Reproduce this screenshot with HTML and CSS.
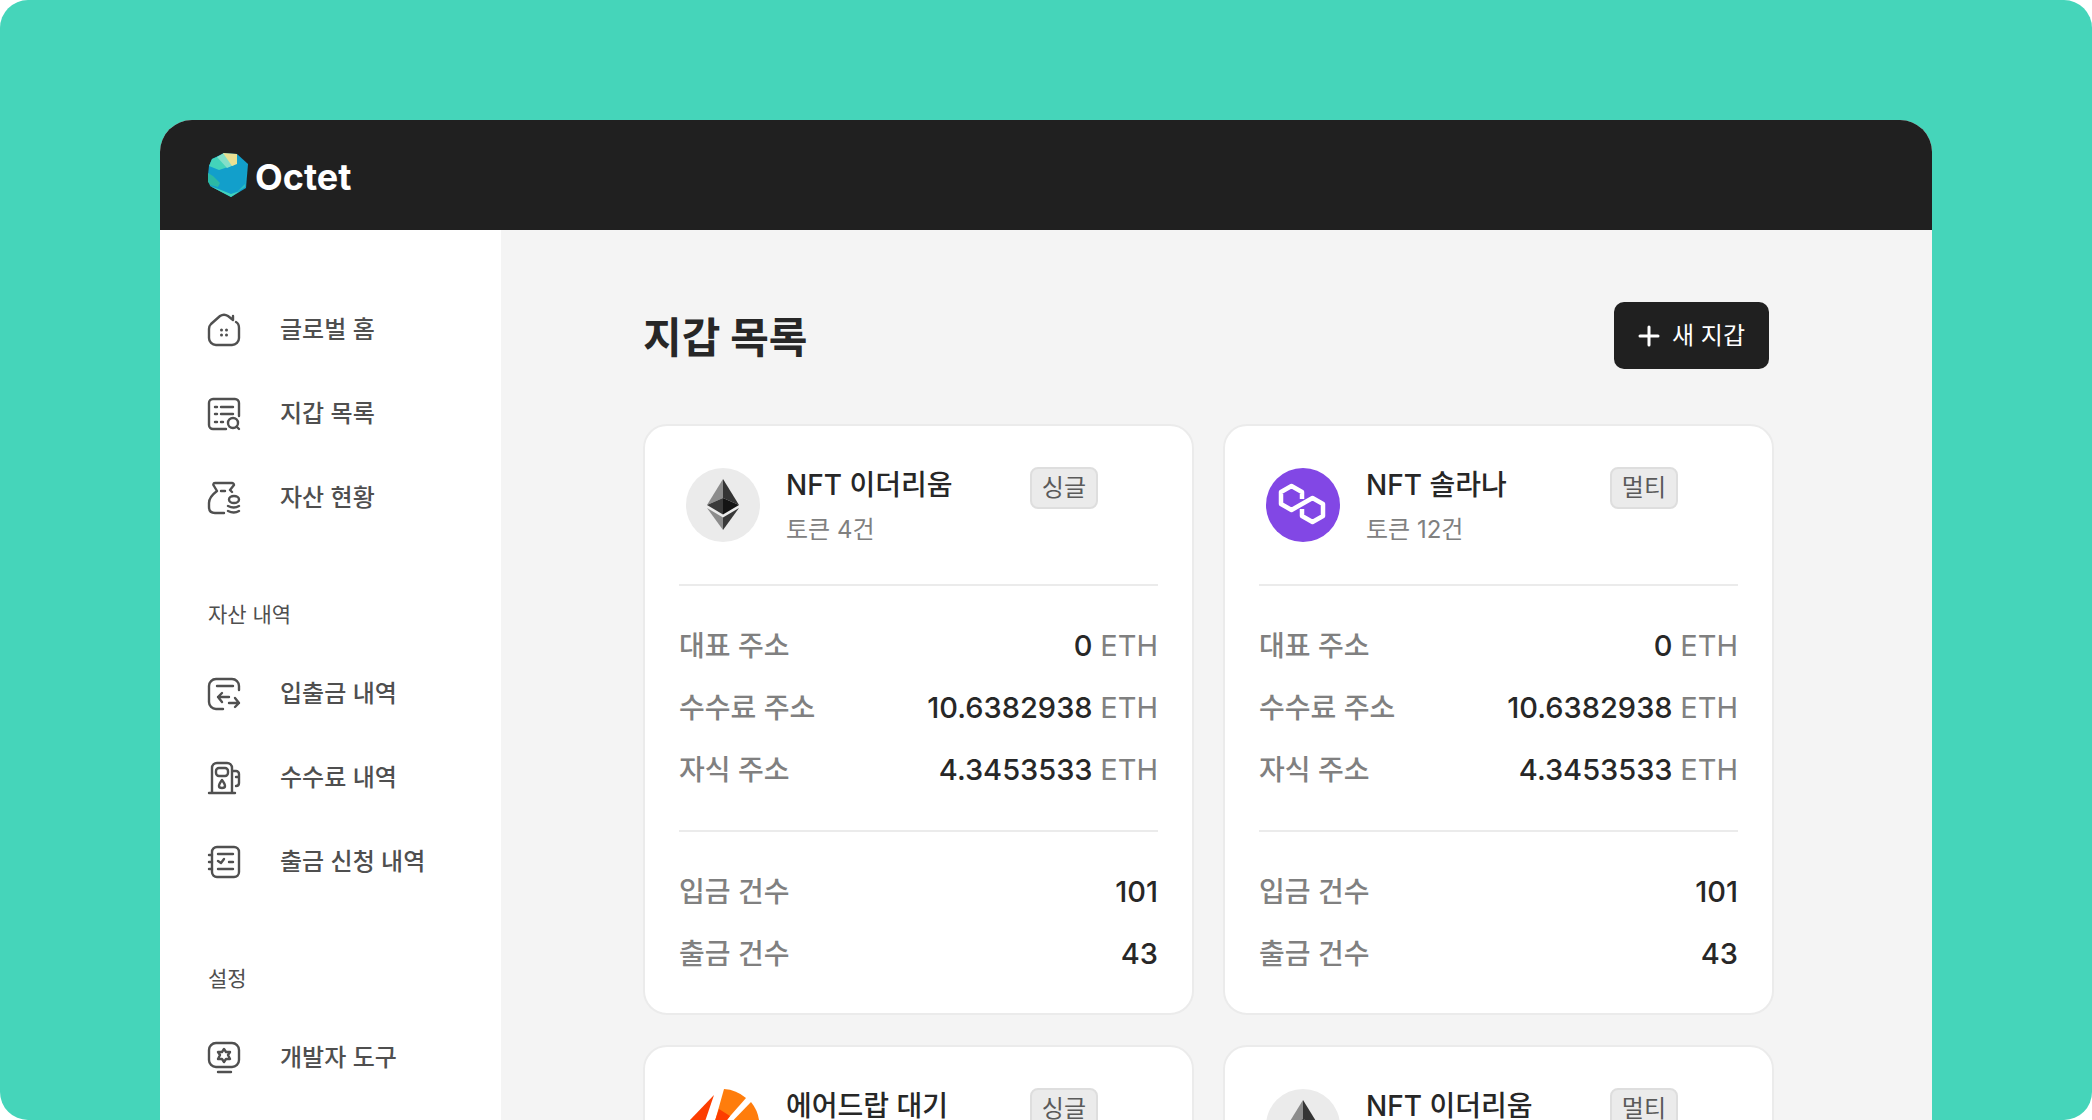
FILE: index.html
```html
<!DOCTYPE html>
<html lang="ko">
<head>
    <meta charset="UTF-8">
    <meta name="viewport" content="width=device-width, initial-scale=1.0">
    <title>Octet</title>
    <link rel="stylesheet" href="styles.css">
</head>
<body>
    <!-- Shared coin logos -->
    <svg class="symbols" aria-hidden="true">
        <symbol id="eth" viewBox="0 0 74 74">
            <circle cx="37" cy="37" r="37" fill="#ebebeb"/>
            <path d="M37 11L21 37l16-7z" fill="#8c8c8c"/>
            <path d="M37 11l16 26-16-7z" fill="#343434"/>
            <path d="M37 30l-16 7 16 9.500z" fill="#393939"/>
            <path d="M37 30l16 7-16 9.500z" fill="#141414"/>
            <path d="M21 40l16 9.500V62z" fill="#8c8c8c"/>
            <path d="M53 40l-16 9.500V62z" fill="#393939"/>
        </symbol>
        <symbol id="polygon" viewBox="0 0 74 74">
            <circle cx="37" cy="37" r="37" fill="#8247e5"/>
            <path d="M36 31v-7l-10.500-6L15 24v12l10.500 6 21-12L57 36v12l-10.500 6L36 48v-7" fill="none" stroke="#fff" stroke-width="4.500" stroke-linejoin="round"/>
        </symbol>
        <symbol id="airdrop" viewBox="0 0 74 74">
            <path d="M28 6L4 31q-3 14 6 28z" fill="#fd3d00"/>
            <path d="M38 0a37 37 0 0 1 22 9L24 50z" fill="#ff7d0c"/>
            <path d="M33 20l11 7-26 36z" fill="#fd3d00"/>
            <path d="M65 13a37 37 0 0 1 8 28L30 66 36 43z" fill="#ff7d0c"/>
        </symbol>
    </svg>

    <div class="stage">
        <div class="window">
            <header class="topbar">
                <a class="brand" href="#">
                    <svg class="brand-mark" viewBox="0 0 40 44">
                        <path d="M4 6L16 0l13 1 11 10-2 24-15 9-21-11-2-11 1-9z" fill="#129fcb"/>
                        <path d="M4 6l12-5 7 12-12 4-10-4z" fill="#43d3ba"/>
                        <path d="M9 4l7-4 10 12-7 3z" fill="#82dfc9"/>
                        <path d="M15 0l14 1v10l-5 2z" fill="#e9e093"/>
                        <path d="M0 20l5 3 7 7-2 4-8-2-2-3z" fill="#2bb9a5"/>
                        <path d="M2 33l11 4 10 4 9-3-9 6z" fill="#43d3ba"/>
                        <path d="M39 14l-2 20-8 5 8-8z" fill="#2fbdbf"/>
                    </svg>
                    <span>Octet</span>
                </a>
            </header>

            <div class="layout">
                <nav class="sidebar">
                    <a class="nav-item" href="#">
                        <svg class="nav-icon" viewBox="0 0 32 32">
                            <path d="M28 8c2 1 3 3 3 6v10a7 7 0 0 1-7 7H8a7 7 0 0 1-7-7V15c0-2 1-4 2-5l9-8c3-2 5-2 8 0l5 4V2"/>
                            <path class="dots" d="M13.500 16h0M18.500 16h0M13.500 21h0M18.500 21h0"/>
                        </svg>
                        <span>글로벌 홈</span>
                    </a>
                    <a class="nav-item" href="#">
                        <svg class="nav-icon" viewBox="0 0 32 32">
                            <path d="M31 18V5a4 4 0 0 0-4-4H5a4 4 0 0 0-4 4v22a4 4 0 0 0 4 4h13M7 9h2M13 9h12M7 16h2M13 16h12M7 24h2M13 24h2M28.500 28.500l2.500 2.500"/>
                            <circle cx="25" cy="25" r="5"/>
                        </svg>
                        <span>지갑 목록</span>
                    </a>
                    <a class="nav-item" href="#">
                        <svg class="nav-icon" viewBox="0 0 32 32">
                            <path d="M24 10l-2-2 4-5c0-1-1-2-2-2H7C5 1 5 3 6 4l3 5c-4 3-8 7-8 12v4c0 4 2 6 6 6h9M13 9h4"/>
                            <ellipse cx="26" cy="17.500" rx="5" ry="3.500"/>
                            <path d="M20 24q6 3 11 0M20 29q6 3 11 0"/>
                        </svg>
                        <span>자산 현황</span>
                    </a>

                    <h2 class="nav-label">자산 내역</h2>
                    <a class="nav-item" href="#">
                        <svg class="nav-icon" viewBox="0 0 32 32">
                            <path d="M31 12V8a7 7 0 0 0-7-7H8a7 7 0 0 0-7 7v16a7 7 0 0 0 7 7h7M9 8h16M14 15l-4 4 4 5M10 19h11M21 25h10M27 20l4 5-4 4"/>
                        </svg>
                        <span>입출금 내역</span>
                    </a>
                    <a class="nav-item" href="#">
                        <svg class="nav-icon" viewBox="0 0 32 32">
                            <path d="M1 31h26M4 31V6a5 5 0 0 1 5-5h10a5 5 0 0 1 5 5v25M24 9h4a3 3 0 0 1 3 3v9q0 3-3 3M28 15h3"/>
                            <rect x="8" y="6" width="12" height="8" rx="3"/>
                            <path d="M14 18q-6 8 0 8t0-8z"/>
                        </svg>
                        <span>수수료 내역</span>
                    </a>
                    <a class="nav-item" href="#">
                        <svg class="nav-icon" viewBox="0 0 32 32">
                            <rect x="4" y="1" width="27" height="30" rx="5"/>
                            <path d="M1 9h3M1 16h3M1 23h3M10 8h15M10 15l3 2 3-4M21 16h4M10 23h15"/>
                        </svg>
                        <span>출금 신청 내역</span>
                    </a>

                    <h2 class="nav-label">설정</h2>
                    <a class="nav-item" href="#">
                        <svg class="nav-icon" viewBox="0 0 32 32">
                            <rect x="1" y="1" width="30" height="24" rx="7"/>
                            <path d="M10 30h13M16 7l2 3h4l-2 3 2 4h-4l-2 3-2-3h-4l2-4-2-3h4z"/>
                        </svg>
                        <span>개발자 도구</span>
                    </a>
                </nav>

                <main class="content">
                    <div class="page-head">
                        <h1>지갑 목록</h1>
                        <button class="new-wallet" type="button">
                            <svg class="plus" viewBox="0 0 22 22"><path d="M11 2v18M2 11h18"/></svg>
                            새 지갑
                        </button>
                    </div>

                    <div class="cards">
                        <article class="card">
                            <div class="card-head">
                                <svg class="coin"><use href="#eth"/></svg>
                                <div>
                                    <h3>NFT 이더리움</h3>
                                    <p>토큰 4건</p>
                                </div>
                                <span class="badge">싱글</span>
                            </div>
                            <dl>
                                <div><dt>대표 주소</dt><dd>0 <span>ETH</span></dd></div>
                                <div><dt>수수료 주소</dt><dd>10.6382938 <span>ETH</span></dd></div>
                                <div><dt>자식 주소</dt><dd>4.3453533 <span>ETH</span></dd></div>
                            </dl>
                            <dl>
                                <div><dt>입금 건수</dt><dd>101</dd></div>
                                <div><dt>출금 건수</dt><dd>43</dd></div>
                            </dl>
                        </article>

                        <article class="card">
                            <div class="card-head">
                                <svg class="coin"><use href="#polygon"/></svg>
                                <div>
                                    <h3>NFT 솔라나</h3>
                                    <p>토큰 12건</p>
                                </div>
                                <span class="badge">멀티</span>
                            </div>
                            <dl>
                                <div><dt>대표 주소</dt><dd>0 <span>ETH</span></dd></div>
                                <div><dt>수수료 주소</dt><dd>10.6382938 <span>ETH</span></dd></div>
                                <div><dt>자식 주소</dt><dd>4.3453533 <span>ETH</span></dd></div>
                            </dl>
                            <dl>
                                <div><dt>입금 건수</dt><dd>101</dd></div>
                                <div><dt>출금 건수</dt><dd>43</dd></div>
                            </dl>
                        </article>

                        <article class="card">
                            <div class="card-head">
                                <svg class="coin"><use href="#airdrop"/></svg>
                                <div>
                                    <h3>에어드랍 대기</h3>
                                </div>
                                <span class="badge">싱글</span>
                            </div>
                        </article>

                        <article class="card">
                            <div class="card-head">
                                <svg class="coin"><use href="#eth"/></svg>
                                <div>
                                    <h3>NFT 이더리움</h3>
                                </div>
                                <span class="badge">멀티</span>
                            </div>
                        </article>
                    </div>
                </main>
            </div>
        </div>
    </div>
</body>
</html>
```
FILE: styles.css
```css
/* General Styles */
* {
    box-sizing: border-box;
}

body {
    margin: 0;
    background: #fff;
    color: #272727;
    font-family: Inter, "Noto Sans CJK KR", sans-serif;
}

h1, h2, h3, p, dl, dd {
    margin: 0;
}

a {
    color: inherit;
    text-decoration: none;
}

.symbols {
    display: none;
}

.stage {
    height: 100vh;
    padding: 120px 160px 0;
    overflow: hidden;
    background: #45d5ba;
    border-radius: 28px;
}

.window {
    overflow: hidden;
    background: #f4f4f4;
    border-radius: 32px 32px 0 0;
}

/* Top bar */
.topbar {
    display: flex;
    align-items: center;
    height: 110px;
    padding: 0 48px;
    background: #202020;
}

.brand {
    display: flex;
    align-items: center;
    gap: 7px;
    color: #fff;
    font-size: 36px;
    font-weight: 700;
    line-height: 40px;
}

.brand span {
    padding-top: 4px;
}

.brand-mark {
    width: 40px;
    height: 44px;
}

/* Sidebar */
.layout {
    display: flex;
}

.sidebar {
    flex: 0 0 341px;
    padding: 58px 48px;
    background: #fff;
    color: #4f4f4f;
}

.nav-item {
    display: flex;
    align-items: center;
    gap: 40px;
    height: 84px;
    font-size: 24px;
    font-weight: 500;
    line-height: 36px;
    white-space: nowrap;
}

.nav-icon {
    width: 32px;
    height: 32px;
    fill: none;
    stroke: #505050;
    stroke-width: 2.4;
    stroke-linecap: round;
    stroke-linejoin: round;
    overflow: visible;
}

.nav-icon .dots {
    stroke-width: 3;
}

.nav-label {
    margin: 57px 0 19px;
    font-size: 21px;
    font-weight: 400;
    line-height: 36px;
}

/* Main content */
.content {
    flex: 1;
    min-width: 0;
    padding: 72px 158px 0 142px;
}

.page-head {
    display: flex;
    align-items: center;
    justify-content: space-between;
    padding-right: 5px;
    margin-bottom: 55px;
}

h1 {
    padding-top: 4px;
    font-size: 42px;
    font-weight: 700;
    line-height: 60px;
}

.new-wallet {
    display: flex;
    align-items: center;
    gap: 12px;
    height: 67px;
    padding: 0 24px;
    border: none;
    border-radius: 10px;
    background: #202020;
    color: #fff;
    font-family: inherit;
    font-size: 24px;
    line-height: 36px;
}

.plus {
    width: 22px;
    height: 22px;
    fill: none;
    stroke: #fff;
    stroke-width: 3;
    stroke-linecap: round;
}

/* Wallet cards */
.cards {
    display: grid;
    grid-template-columns: 1fr 1fr;
    gap: 30px 29px;
}

.card {
    padding: 36px 34px 28px;
    border: 2px solid #ebebeb;
    border-radius: 24px;
    background: #fff;
}

.card-head {
    display: flex;
    align-items: flex-start;
    height: 122px;
    padding-left: 7px;
}

.coin {
    width: 74px;
    height: 74px;
    margin: 6px 26px 0 0;
}

h3 {
    font-size: 28px;
    font-weight: 500;
    line-height: 46px;
}

.card-head p {
    color: #808080;
    font-size: 24px;
    line-height: 44px;
}

.badge {
    margin: 5px 60px 0 auto;
    padding: 0 10px;
    border: 2px solid #dedede;
    border-radius: 8px;
    background: #ebebeb;
    color: #5a5a5a;
    font-size: 24px;
    line-height: 38px;
}

dl {
    padding: 29px 0;
    border-top: 2px solid #ebebeb;
}

dl:last-child {
    padding-bottom: 0;
}

dl div {
    display: flex;
    justify-content: space-between;
    font-size: 28px;
    font-weight: 500;
    line-height: 62px;
}

dt {
    color: #808080;
}

dd {
    font-size: 29px;
}

dd span {
    color: #808080;
    font-weight: 400;
}
```
